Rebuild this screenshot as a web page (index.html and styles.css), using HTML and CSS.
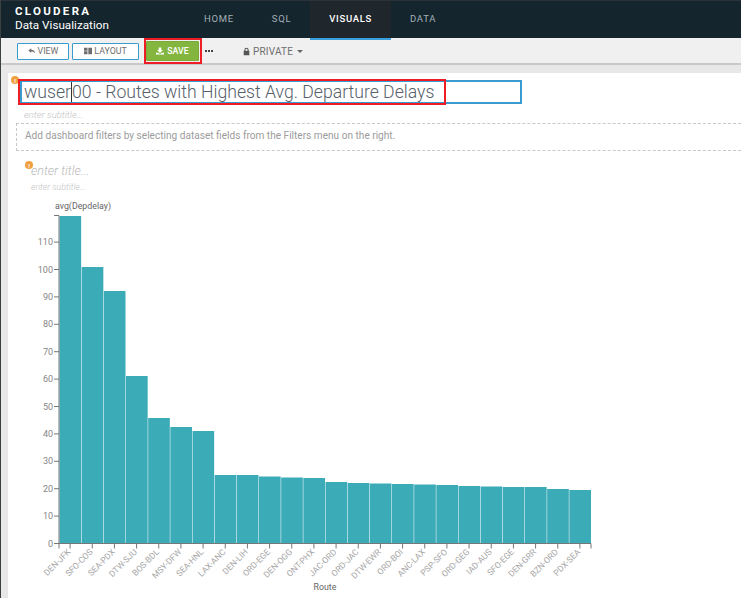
FILE: index.html
```html
<!DOCTYPE html>
<html lang="en">
<head>
    <meta charset="UTF-8">
    <meta name="viewport" content="width=device-width, initial-scale=1.0">
    <title>Cloudera Data Visualization</title>
    <link rel="stylesheet" href="styles.css">
</head>
<body>
<header class="navbar">
    <div class="brand">
        <div class="brand-name">CLOUDERA</div>
        <div class="brand-sub">Data Visualization</div>
    </div>
    <nav class="nav-links">
        <a class="nav-link">HOME</a>
        <a class="nav-link">SQL</a>
        <a class="nav-link active">VISUALS</a>
        <a class="nav-link">DATA</a>
    </nav>
</header>

<div class="toolbar">
    <button class="btn btn-outline btn-view" type="button">
        <svg class="icon" viewBox="0 0 10 10"><path d="M4 1.5 0.5 4.5 4 7.5V5.6c2 0 3.6.4 5 2.6C8.7 5 7 3.5 4 3.4z"/></svg>
        VIEW
    </button>
    <button class="btn btn-outline btn-layout" type="button">
        <svg class="icon" viewBox="0 0 10 10"><path d="M0 1h4.4v3.6H0zM0 5.4h4.4V9H0zM5.4 1H10v8H5.4z"/></svg>
        LAYOUT
    </button>
    <div class="save-wrap">
        <button class="btn btn-save" type="button">
            <svg class="icon" viewBox="0 0 10 10"><path d="M3.4.5h3.2v3.4h2L5 7.4 1.400 3.900h2zM0 7.200h2.600L5 8.800l2.400-1.600H10v2.300H0z"/></svg>
            SAVE
        </button>
        <span class="highlight save-highlight"></span>
    </div>
    <span class="more"></span>
    <span class="privacy">
        <svg class="icon lock" viewBox="0 0 10 11"><path d="M2 4.500V3.200a3 3 0 0 1 6 0v1.300h1V11H1V4.500zm1.400 0h3.200V3.200a1.600 1.600 0 0 0-3.200 0z"/></svg>
        PRIVATE
        <span class="caret"></span>
    </span>
</div>

<div class="workspace">
    <main class="sheet">
        <span class="warn warn-title">!</span>
        <div class="title-row">
            <div class="title-input">wuser<span class="cursor"></span>00 - Routes with Highest Avg. Departure Delays</div>
            <span class="highlight title-highlight"></span>
        </div>
        <div class="subtitle">enter subtitle...</div>
        <div class="filters">Add dashboard filters by selecting dataset fields from the Filters menu on the right.</div>

        <section class="visual">
            <span class="warn warn-visual">!</span>
            <div class="visual-title">enter title...</div>
            <div class="visual-subtitle">enter subtitle...</div>
            <svg id="chart" class="chart" width="733" height="403" viewBox="8 195 733 403"></svg>
        </section>
    </main>
</div>

<script>
    var routes = [
        ["DEN-JFK", 216], ["SFO-COS", 267], ["SEA-PDX", 291], ["DTW-SJU", 376],
        ["BOS-BDL", 418], ["MSY-DFW", 427], ["SEA-HNL", 431], ["LAX-ANC", 475],
        ["DEN-LIH", 475], ["ORD-EGE", 476.5], ["DEN-OGG", 477.5], ["ONT-PHX", 478],
        ["JAC-ORD", 482], ["ORD-JAC", 483], ["DTW-EWR", 483.5], ["ORD-BOI", 484],
        ["ANC-LAX", 484.5], ["PSP-SFO", 485], ["ORD-GEG", 486], ["IAD-AUS", 486.5],
        ["SFO-EGE", 487], ["DEN-GRR", 487], ["BZN-ORD", 489], ["PDX-SEA", 490]
    ];
    var left = 59, right = 591, bottom = 543.5;
    var step = (right - left) / routes.length;
    var html = '';

    routes.forEach(function (r, i) {
        var x = left + i * step;
        var center = x + step / 2;
        html += '<rect class="bar" x="' + (x + 0.5) + '" y="' + r[1] + '" width="' + (step - 0.5) + '" height="' + (bottom - r[1]) + '"></rect>';
        html += '<line class="axis" x1="' + center + '" x2="' + center + '" y1="' + bottom + '" y2="' + (bottom + 5) + '"></line>';
        html += '<text class="tick-x" transform="translate(' + (center + 1) + ' ' + (bottom + 9) + ') rotate(-45)">' + r[0] + '</text>';
    });

    for (var v = 0; v <= 110; v += 10) {
        var y = bottom - v * 2.74;
        html += '<line class="axis" x1="' + (left - 5) + '" x2="' + left + '" y1="' + y + '" y2="' + y + '"></line>';
        html += '<text class="tick-y" x="' + (left - 6) + '" y="' + (y + 3) + '">' + v + '</text>';
    }

    html += '<path class="axis" d="M54 215.500H59V' + bottom + 'H' + right + 'V' + (bottom + 5) + '"></path>';
    html += '<line class="axis" x1="59" x2="59" y1="' + bottom + '" y2="' + (bottom + 5) + '"></line>';
    html += '<text class="axis-title" x="55" y="208.500">avg(Depdelay)</text>';
    html += '<text class="axis-title" x="325" y="590" text-anchor="middle">Route</text>';

    document.getElementById('chart').innerHTML = html;
</script>
</body>
</html>
```

FILE: styles.css
```css
* {
    box-sizing: border-box;
}

html, body {
    height: 100%;
}

body {
    margin: 0;
    overflow: hidden;
    font-family: Roboto, "Liberation Sans", sans-serif;
    background-color: #e8e8e8;
    border-left: 1px solid #3a3f42;
}

.navbar {
    display: flex;
    height: 38px;
    background-color: #14252d;
    border-top: 1px solid #2b3338;
}

.brand {
    width: 184px;
    padding: 4px 0 0 14px;
    color: #ffffff;
}

.brand-name {
    font-size: 11.5px;
    font-weight: 700;
    line-height: 13px;
    letter-spacing: 2.3px;
}

.brand-sub {
    font-size: 11.7px;
    line-height: 15px;
}

.nav-links {
    display: flex;
}

.nav-link {
    display: flex;
    align-items: center;
    padding: 0 19px 3px;
    font-size: 9.5px;
    letter-spacing: 0.7px;
    color: #a3b0b7;
}

.nav-link.active {
    height: 39px;
    font-weight: 500;
    color: #ffffff;
    background-color: #1f262c;
    border-bottom: 2px solid #3aa0dc;
}

.toolbar {
    display: flex;
    align-items: center;
    height: 27px;
    padding: 1px 0 0 16px;
    background-color: #f0f0f0;
    border-bottom: 2px solid #c9c9c9;
}

.btn {
    display: flex;
    align-items: center;
    justify-content: center;
    gap: 2px;
    height: 17px;
    padding: 0;
    font-family: inherit;
    font-size: 8.8px;
    border-radius: 1px;
}

.btn-outline {
    color: #6e6e6e;
    background-color: #ffffff;
    border: 1px solid #3a9bd0;
}

.btn-view {
    width: 52px;
    margin-right: 3px;
}

.btn-layout {
    width: 67px;
}

.icon {
    width: 8px;
    height: 8px;
    fill: currentColor;
}

.save-wrap {
    position: relative;
    margin-left: 7px;
}

.btn-save {
    gap: 3px;
    width: 53px;
    height: 20px;
    font-weight: 500;
    color: #ffffff;
    background-color: #84b63f;
    border: 1px solid #7aa93a;
}

.highlight {
    position: absolute;
    border: 2px solid #ee1c25;
    pointer-events: none;
}

.save-highlight {
    top: -3px;
    left: -2px;
    width: 58px;
    height: 26px;
}

.more {
    width: 8px;
    margin-left: 6px;
    border-top: 2px dotted #444444;
}

.privacy {
    display: flex;
    align-items: center;
    gap: 3px;
    margin-left: 30px;
    font-size: 10px;
    letter-spacing: 0.2px;
    color: #6e6e6e;
}

.lock {
    width: 7px;
    height: 9px;
    color: #555555;
}

.caret {
    width: 0;
    height: 0;
    margin-left: 1px;
    border-top: 3px solid #666666;
    border-left: 3px solid transparent;
    border-right: 3px solid transparent;
}

.workspace {
    height: calc(100% - 65px);
    padding: 8px 0 0 7px;
}

.sheet {
    position: relative;
    height: 100%;
    padding: 7px 0 0 12px;
    background-color: #ffffff;
}

.warn {
    position: absolute;
    display: flex;
    align-items: center;
    justify-content: center;
    width: 8px;
    height: 8px;
    font-size: 6px;
    font-weight: 700;
    color: #ffffff;
    background-color: #f0a040;
    border-radius: 50%;
}

.warn-title {
    top: 3px;
    left: 3px;
}

.title-row {
    position: relative;
    width: 502px;
}

.title-input {
    height: 24px;
    padding-left: 2px;
    font-size: 17.65px;
    font-weight: 300;
    line-height: 20px;
    white-space: nowrap;
    color: #55606a;
    border: 2px solid #3a9bd0;
}

.cursor {
    display: inline-block;
    width: 1px;
    height: 20px;
    vertical-align: top;
    background-color: #333333;
}

.title-highlight {
    top: -1px;
    left: -2px;
    width: 428px;
    height: 26px;
}

.subtitle {
    margin: 5px 0 0 4px;
    font-size: 9.5px;
    font-style: italic;
    font-weight: 300;
    line-height: 12px;
    color: #c4c4c4;
}

.filters {
    height: 28px;
    margin: 2px 0 0 -4px;
    padding-left: 8px;
    font-size: 10.1px;
    line-height: 24px;
    color: #9c9c9c;
    border: 1px dashed #c8c8c8;
    border-right: none;
}

.visual {
    position: relative;
    padding: 12px 0 0 11px;
}

.warn-visual {
    top: 10px;
    left: 5px;
}

.visual-title {
    font-size: 12.5px;
    font-style: italic;
    font-weight: 300;
    line-height: 15px;
    color: #b9b9b9;
}

.visual-subtitle {
    margin-top: 4px;
    font-size: 8.8px;
    font-style: italic;
    font-weight: 300;
    line-height: 10px;
    color: #c4c4c4;
}

.chart {
    position: absolute;
    top: 44px;
    left: -12px;
}

.bar {
    fill: #3babb8;
}

.axis {
    fill: none;
    stroke: #777777;
    stroke-width: 1;
}

.tick-x {
    font-size: 8.5px;
    text-anchor: end;
    fill: #a6a6a6;
}

.tick-y {
    font-size: 9px;
    text-anchor: end;
    fill: #858585;
}

.axis-title {
    font-size: 8.8px;
    fill: #666666;
}
```
